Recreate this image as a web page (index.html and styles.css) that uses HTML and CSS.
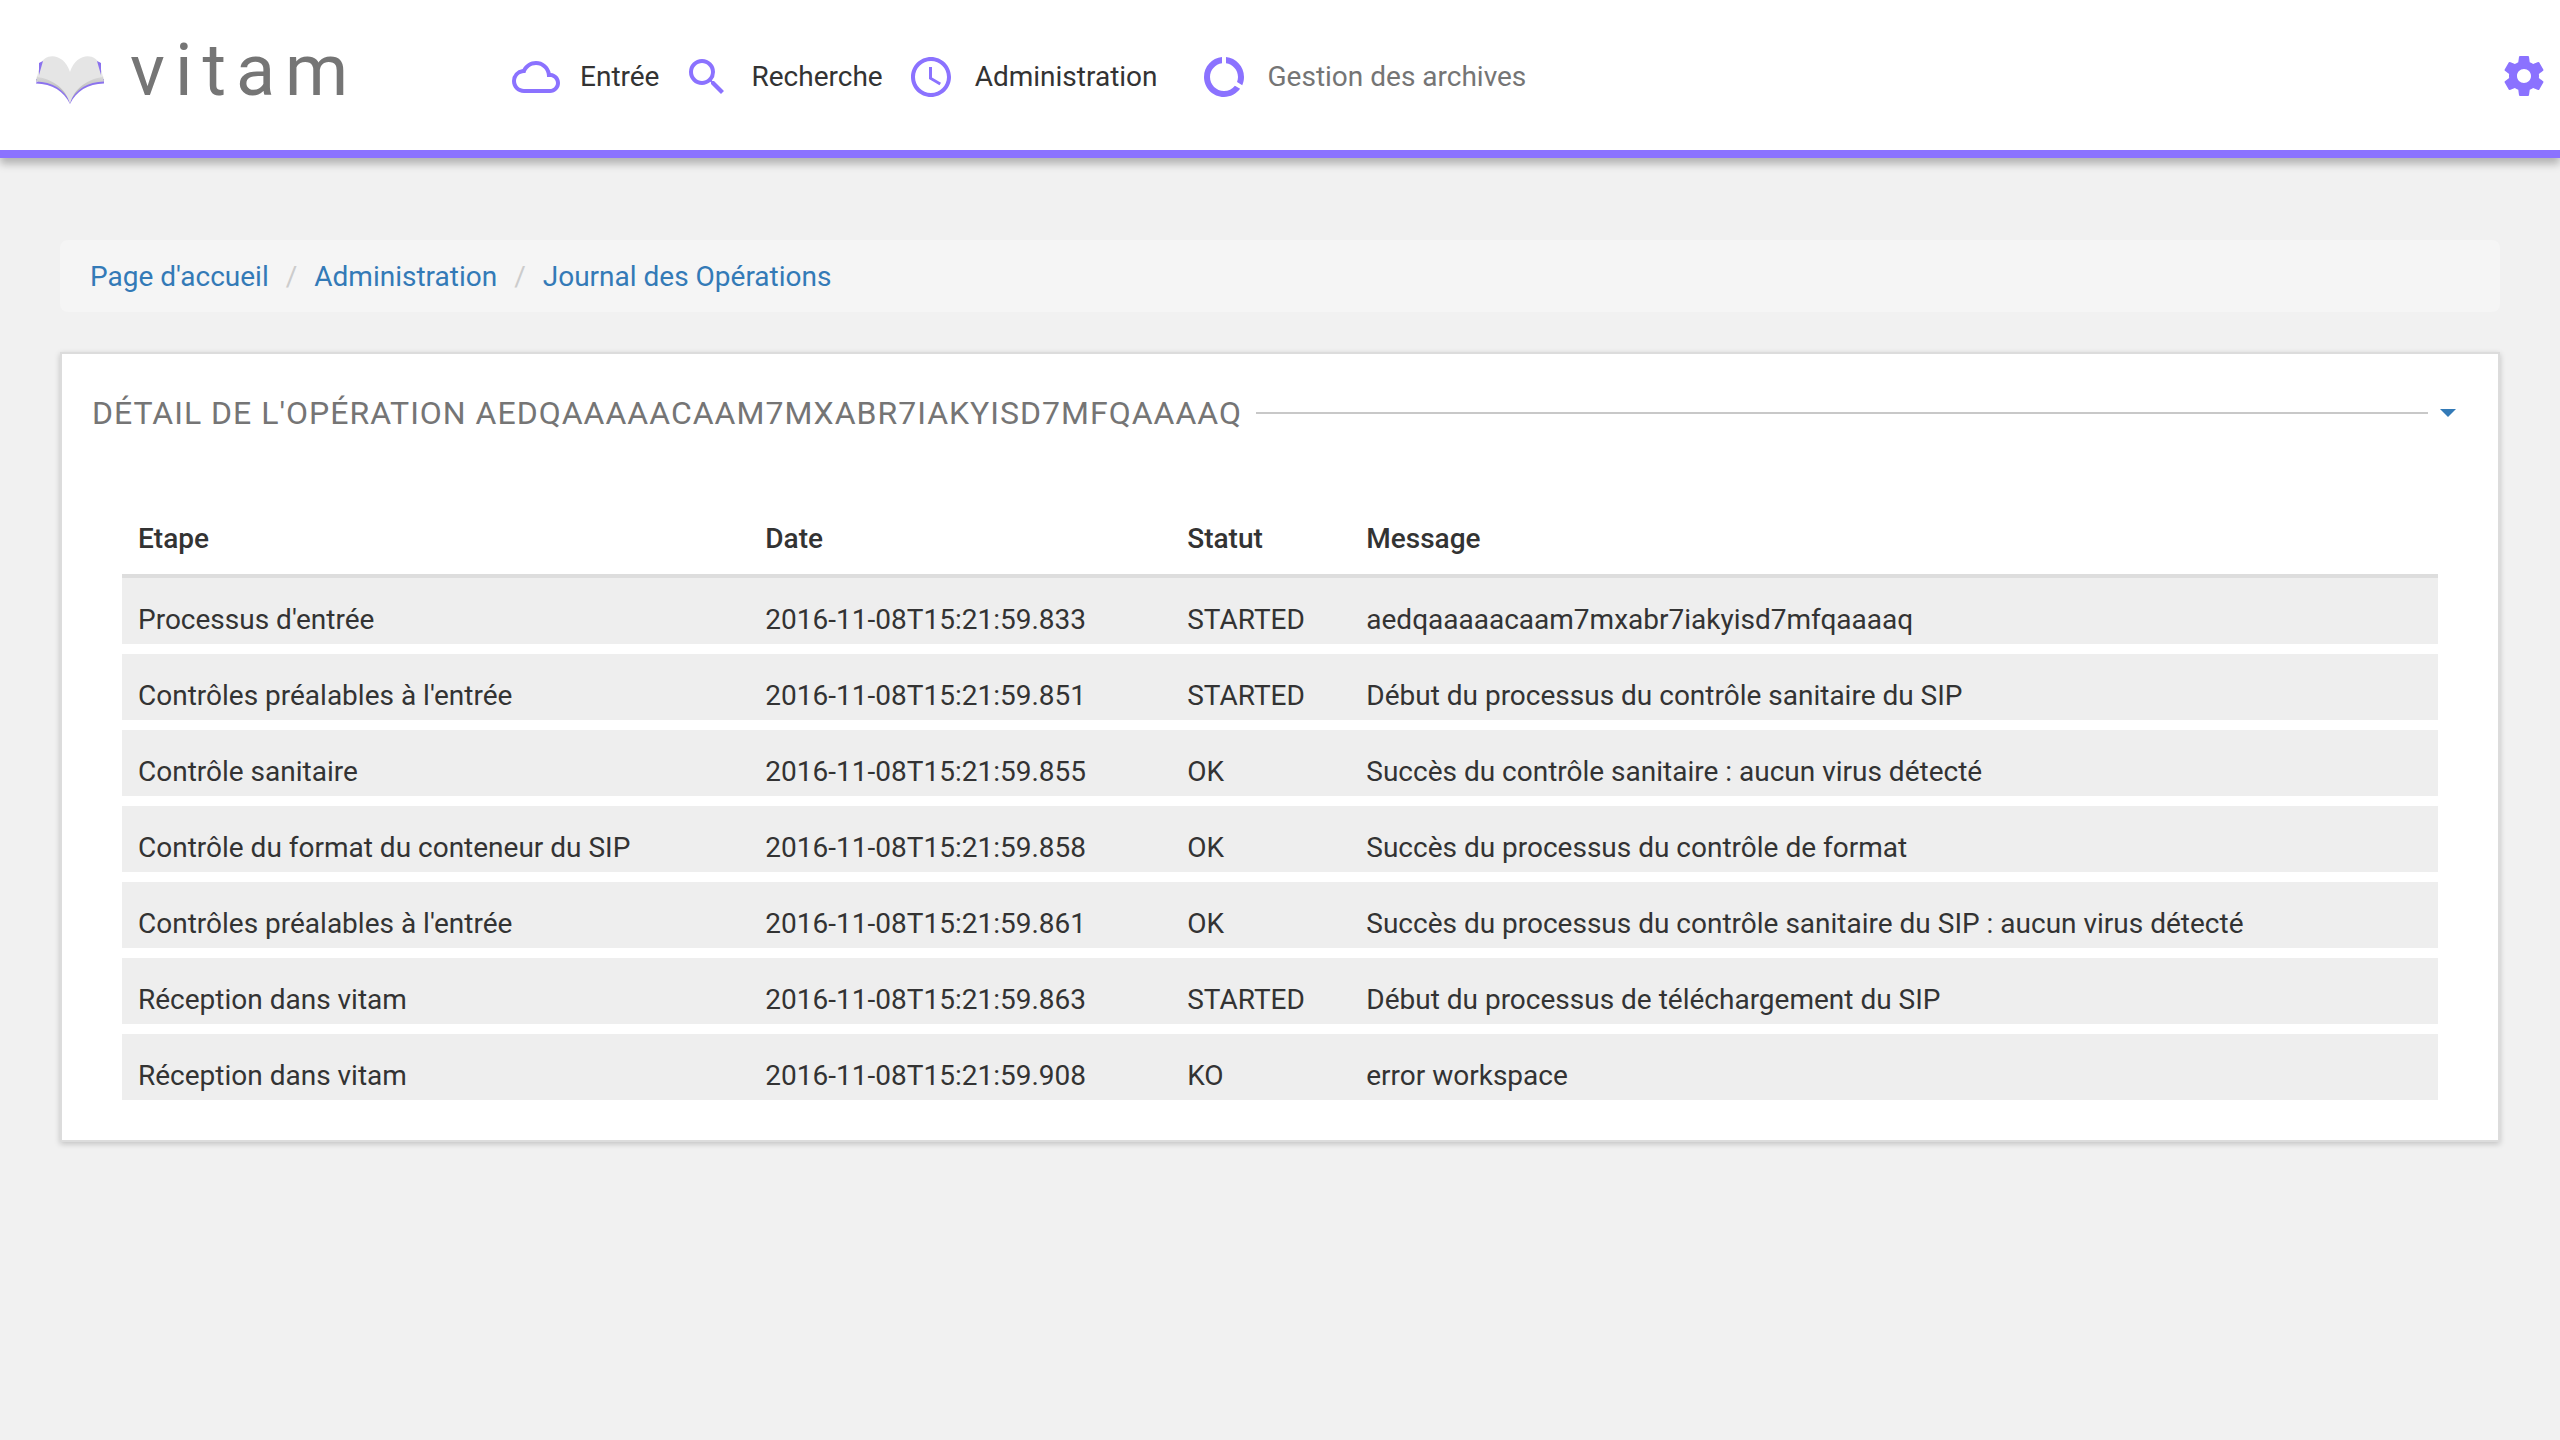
FILE: index.html
```html
<!DOCTYPE html>
<html lang="fr">
<head>
<meta charset="utf-8">
<meta name="viewport" content="width=device-width, initial-scale=1">
<title>Vitam - Journal des Opérations</title>
<link rel="stylesheet" href="styles.css">
</head>
<body>
<header class="topbar">
  <a class="brand" href="#">
    <svg class="brand-mark" viewBox="0 0 68 50" aria-hidden="true">
      <defs>
        <linearGradient id="edge" x1="0" y1="0" x2="0" y2="1">
          <stop offset="0" stop-color="#d8d8d8"/>
          <stop offset="1" stop-color="#a8a8a8"/>
        </linearGradient>
      </defs>
      <path fill="#8b72ee" d="M4 8 9 6 6 22 0 28 2 22ZM64 8 60 6 62 22 68 28 66 22ZM0 24V28.500C16 29 28 36 34 49 40 36 52 29 68 28.500V24Z"/>
      <path fill="url(#edge)" d="M1 21 0 26.500C16 27 28 34 34 47 40 34 52 27 68 26.500L67 21Z"/>
      <path fill="#e5e5e5" d="M4 10C9-3 28-2 34 17 40-2 59-3 64 10L67 22C52 24 38 33 34 49 30 33 16 24 1 22Z"/>
      <path fill="#8b72ee" d="M3 8 7 6 3 20ZM65 8 61 6 65 20Z"/>
    </svg>
    <span class="brand-name">vitam</span>
  </a>
  <nav class="menu" aria-label="Navigation principale">
    <a class="menu-item" href="#"><svg class="icon" viewBox="0 0 24 24" aria-hidden="true"><path d="M19.350 10.040A7.490 7.490 0 0 0 12 4C9.110 4 6.600 5.640 5.350 8.040A5.994 5.994 0 0 0 0 14c0 3.310 2.690 6 6 6h13c2.760 0 5-2.240 5-5 0-2.640-2.050-4.780-4.650-4.960zM19 18H6c-2.210 0-4-1.790-4-4s1.790-4 4-4h.710C7.370 7.690 9.480 6 12 6c3.040 0 5.500 2.460 5.500 5.500v.500H19c1.660 0 3 1.340 3 3s-1.340 3-3 3z"/></svg>Entrée</a>
    <a class="menu-item" href="#"><svg class="icon" viewBox="0 0 24 24" aria-hidden="true"><path d="M15.500 14h-.790l-.280-.270A6.471 6.471 0 0 0 16 9.500 6.500 6.500 0 1 0 9.500 16c1.610 0 3.090-.590 4.230-1.570l.270.280v.790l5 4.990L20.490 19l-4.990-5zm-6 0C7.010 14 5 11.990 5 9.500S7.010 5 9.500 5 14 7.010 14 9.500 11.990 14 9.500 14z"/></svg>Recherche</a>
    <a class="menu-item" href="#"><svg class="icon" viewBox="0 0 24 24" aria-hidden="true"><path d="M11.990 2C6.470 2 2 6.480 2 12s4.470 10 9.990 10C17.520 22 22 17.520 22 12S17.520 2 11.990 2zM12 20c-4.420 0-8-3.580-8-8s3.580-8 8-8 8 3.580 8 8-3.580 8-8 8zm.500-13H11v6l5.250 3.150.750-1.230-4.500-2.670z"/></svg>Administration</a>
    <a class="menu-item menu-item-muted" href="#"><svg class="icon" viewBox="0 0 24 24" aria-hidden="true"><path d="M13 2.050v3.030c3.390.490 6 3.390 6 6.920 0 .900-.180 1.750-.480 2.540l2.600 1.530c.560-1.240.880-2.620.880-4.070 0-5.180-3.950-9.450-9-9.950zM12 19c-3.870 0-7-3.130-7-7 0-3.530 2.610-6.430 6-6.920V2.050c-5.060.500-9 4.760-9 9.950 0 5.520 4.470 10 9.990 10 3.310 0 6.240-1.610 8.060-4.090l-2.600-1.530A6.950 6.950 0 0 1 12 19z"/></svg>Gestion des archives</a>
  </nav>
  <button class="settings" type="button" aria-label="Paramètres">
    <svg class="icon" viewBox="0 0 24 24" aria-hidden="true"><path d="M19.430 12.980c.040-.320.070-.640.070-.980s-.030-.660-.070-.980l2.110-1.650c.190-.150.240-.420.120-.640l-2-3.460c-.120-.220-.390-.300-.610-.220l-2.490 1c-.520-.400-1.080-.730-1.690-.980l-.380-2.650A.488.488 0 0 0 14 2h-4c-.250 0-.460.180-.490.420l-.380 2.650c-.610.250-1.170.590-1.690.980l-2.490-1c-.230-.090-.490 0-.610.220l-2 3.460c-.130.220-.070.490.120.640l2.110 1.650c-.040.320-.070.650-.070.980s.030.660.070.980l-2.110 1.650c-.190.150-.240.420-.120.640l2 3.460c.120.220.390.300.610.220l2.490-1c.520.400 1.080.730 1.690.980l.380 2.650c.030.240.240.420.490.420h4c.250 0 .460-.180.490-.420l.380-2.650c.610-.250 1.170-.590 1.690-.980l2.490 1c.230.090.490 0 .610-.220l2-3.460c.120-.220.070-.490-.120-.640l-2.110-1.650zM12 15.500c-1.930 0-3.500-1.570-3.500-3.500s1.570-3.500 3.500-3.500 3.500 1.570 3.500 3.500-1.570 3.500-3.500 3.500z"/></svg>
  </button>
</header>
<main class="page">
  <nav aria-label="Fil d'Ariane">
    <ol class="breadcrumb">
      <li><a href="#">Page d'accueil</a></li>
      <li><a href="#">Administration</a></li>
      <li><a href="#">Journal des Opérations</a></li>
    </ol>
  </nav>
  <section class="panel">
    <div class="panel-head">
      <h1 class="panel-title">DÉTAIL DE L'OPÉRATION AEDQAAAAACAAM7MXABR7IAKYISD7MFQAAAAQ</h1>
      <span class="panel-rule"></span>
      <button class="panel-toggle" type="button" aria-label="Replier le détail" aria-expanded="true"><span class="caret"></span></button>
    </div>
    <table class="log">
      <thead>
        <tr><th scope="col">Etape</th><th scope="col">Date</th><th scope="col">Statut</th><th scope="col">Message</th></tr>
      </thead>
      <tbody>
        <tr><td>Processus d'entrée</td><td>2016-11-08T15:21:59.833</td><td>STARTED</td><td>aedqaaaaacaam7mxabr7iakyisd7mfqaaaaq</td></tr>
        <tr><td>Contrôles préalables à l'entrée</td><td>2016-11-08T15:21:59.851</td><td>STARTED</td><td>Début du processus du contrôle sanitaire du SIP</td></tr>
        <tr><td>Contrôle sanitaire</td><td>2016-11-08T15:21:59.855</td><td>OK</td><td>Succès du contrôle sanitaire : aucun virus détecté</td></tr>
        <tr><td>Contrôle du format du conteneur du SIP</td><td>2016-11-08T15:21:59.858</td><td>OK</td><td>Succès du processus du contrôle de format</td></tr>
        <tr><td>Contrôles préalables à l'entrée</td><td>2016-11-08T15:21:59.861</td><td>OK</td><td>Succès du processus du contrôle sanitaire du SIP : aucun virus détecté</td></tr>
        <tr><td>Réception dans vitam</td><td>2016-11-08T15:21:59.863</td><td>STARTED</td><td>Début du processus de téléchargement du SIP</td></tr>
        <tr><td>Réception dans vitam</td><td>2016-11-08T15:21:59.908</td><td>KO</td><td>error workspace</td></tr>
      </tbody>
    </table>
  </section>
</main>
</body>
</html>
```

FILE: styles.css
```css
* {
  box-sizing: border-box;
}

body {
  margin: 0;
  background: #f1f1f1;
  color: #333;
  font-family: Roboto, "Liberation Sans", sans-serif;
  font-size: 28px;
  line-height: 40px;
}

a {
  color: #337ab7;
  text-decoration: none;
}

button {
  padding: 0;
  border: 0;
  background: none;
  cursor: pointer;
}

/* Top bar */
.topbar {
  display: flex;
  align-items: center;
  padding: 0 12px 0 36px;
  border-bottom: 8px solid #8b72ff;
  background: #fff;
  box-shadow: 0 6px 8px rgba(0, 0, 0, 0.26);
}

.brand {
  display: flex;
  align-items: center;
  flex: 0 0 476px;
  gap: 26px;
  height: 150px;
  color: #757575;
}

.brand-mark {
  width: 68px;
  height: 50px;
  margin-top: 10px;
}

.brand-name {
  padding-bottom: 8px;
  font-size: 72px;
  line-height: 80px;
  letter-spacing: 10px;
}

.menu {
  display: flex;
  gap: 24px;
  padding-top: 4px;
}

.menu-item {
  display: flex;
  align-items: center;
  gap: 20px;
  color: #333;
}

.menu-item-muted {
  margin-left: 18px;
  color: #757575;
}

.icon {
  display: block;
  width: 48px;
  height: 48px;
  fill: #8b72ff;
}

.settings {
  margin-left: auto;
  padding-top: 2px;
}

/* Content */
.page {
  padding: 82px 60px 40px;
}

.breadcrumb {
  display: flex;
  margin: 0 0 40px;
  padding: 17px 30px 15px;
  border-radius: 8px;
  background: #f5f5f5;
  list-style: none;
}

.breadcrumb li + li::before {
  content: "/";
  padding: 0 17px;
  color: #ccc;
}

.panel {
  padding: 39px 30px 30px;
  border: 2px solid #dcdcdc;
  background: #fff;
  box-shadow: 0 2px 6px rgba(0, 0, 0, 0.2);
}

.panel-head {
  display: flex;
  align-items: center;
  padding-right: 12px;
}

.panel-title {
  margin: 0;
  color: #757575;
  font-size: 32px;
  font-weight: 400;
  line-height: 40px;
  letter-spacing: 1px;
}

.panel-rule {
  flex: 1;
  height: 2px;
  margin: 0 12px 0 14px;
  background: #c8c8c8;
}

.caret {
  display: block;
  border-top: 8px solid #337ab7;
  border-right: 8px solid transparent;
  border-left: 8px solid transparent;
}

/* Operation log */
.log {
  width: calc(100% - 60px);
  margin: 69px 30px 0;
  border-spacing: 0;
}

.log th {
  padding: 17px 16px 15px;
  border-bottom: 4px solid #ddd;
  font-weight: 500;
  text-align: left;
}

.log td {
  padding: 22px 16px 4px;
  border-bottom: 10px solid #fff;
  background: #eee;
}
```
